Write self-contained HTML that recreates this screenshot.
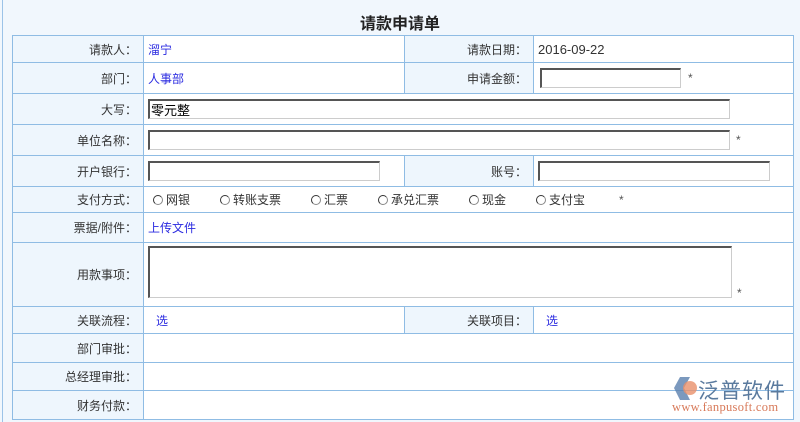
<!DOCTYPE html>
<html><head><meta charset="utf-8"><style>
*{margin:0;padding:0;box-sizing:border-box}
body{width:800px;height:422px;background:#f1f7fd;font-family:"Liberation Sans","Noto Sans CJK SC",sans-serif;font-size:12px;color:#333;position:relative;overflow:hidden}
.pb{position:absolute;left:2px;top:0;width:1px;height:422px;background:#9cc3e8}
.t{position:absolute;left:0;top:10px;width:800px;text-align:center;font-size:16px;font-weight:bold;color:#222}
.c{position:absolute;border:1px solid #8fbce4;background:#fff;display:flex;align-items:center}
.l{background:#eef6fd;justify-content:flex-end;padding-right:6px}
.v{padding-left:4px}
.b{color:#2a2ae0}
input,.ta{border:1px solid #ccc;border-top:2px solid #555;border-left:2px solid #555;background:#fff;height:20px;font-size:13px;font-family:inherit}
.r{display:inline-block;width:10px;height:10px;border-radius:50%;border:1px solid #888;border-left-color:#333;border-top-color:#333;margin-right:3px;vertical-align:-1px;background:#fff}
.s{color:#555;margin-left:6px}
.logo{position:absolute;left:668px;top:375px}
</style></head><body>
<div class="pb"></div>
<div class="t">请款申请单</div>
<div class="c l" style="left:12px;top:35px;width:132px;height:28px">请款人：</div>
<div class="c v b" style="left:143px;top:35px;width:262px;height:28px">溜宁</div>
<div class="c l" style="left:404px;top:35px;width:130px;height:28px">请款日期：</div>
<div class="c v" style="left:533px;top:35px;width:261px;height:28px;font-size:13px">2016-09-22</div>
<div class="c l" style="left:12px;top:62px;width:132px;height:32px">部门：</div>
<div class="c v b" style="left:143px;top:62px;width:262px;height:32px">人事部</div>
<div class="c l" style="left:404px;top:62px;width:130px;height:32px">申请金额：</div>
<div class="c v" style="left:533px;top:62px;width:261px;height:32px"><input style="width:141px;margin-left:2px"><span class="s" style="margin-left:7px">*</span></div>
<div class="c l" style="left:12px;top:93px;width:132px;height:32px">大写：</div>
<div class="c v" style="left:143px;top:93px;width:651px;height:32px"><input value="零元整" style="width:582px;padding-left:1px"></div>
<div class="c l" style="left:12px;top:124px;width:132px;height:32px">单位名称：</div>
<div class="c v" style="left:143px;top:124px;width:651px;height:32px"><input style="width:582px"><span class="s">*</span></div>
<div class="c l" style="left:12px;top:155px;width:132px;height:32px">开户银行：</div>
<div class="c v" style="left:143px;top:155px;width:262px;height:32px"><input style="width:232px"></div>
<div class="c l" style="left:404px;top:155px;width:130px;height:32px">账号：</div>
<div class="c v" style="left:533px;top:155px;width:261px;height:32px"><input style="width:232px"></div>
<div class="c l" style="left:12px;top:186px;width:132px;height:27px">支付方式：</div>
<div class="c v" style="left:143px;top:186px;width:651px;height:27px;padding-left:9px">
<span style="width:67px;display:inline-block"><i class="r"></i>网银</span><span style="width:91px;display:inline-block"><i class="r"></i>转账支票</span><span style="width:67px;display:inline-block"><i class="r"></i>汇票</span><span style="width:91px;display:inline-block"><i class="r"></i>承兑汇票</span><span style="width:67px;display:inline-block"><i class="r"></i>现金</span><span style="width:77px;display:inline-block"><i class="r"></i>支付宝</span><span class="s">*</span></div>
<div class="c l" style="left:12px;top:212px;width:132px;height:31px">票据/附件：</div>
<div class="c v b" style="left:143px;top:212px;width:651px;height:31px">上传文件</div>
<div class="c l" style="left:12px;top:242px;width:132px;height:65px">用款事项：</div>
<div class="c v" style="left:143px;top:242px;width:651px;height:65px;align-items:flex-start;padding-top:3px"><div class="ta" style="width:584px;height:52px"></div><span class="s" style="margin-top:40px;margin-left:5px">*</span></div>
<div class="c l" style="left:12px;top:306px;width:132px;height:28px">关联流程：</div>
<div class="c v b" style="left:143px;top:306px;width:262px;height:28px;padding-left:12px">选</div>
<div class="c l" style="left:404px;top:306px;width:130px;height:28px">关联项目：</div>
<div class="c v b" style="left:533px;top:306px;width:261px;height:28px;padding-left:12px">选</div>
<div class="c l" style="left:12px;top:333px;width:132px;height:30px">部门审批：</div>
<div class="c" style="left:143px;top:333px;width:651px;height:30px"></div>
<div class="c l" style="left:12px;top:362px;width:132px;height:29px">总经理审批：</div>
<div class="c" style="left:143px;top:362px;width:651px;height:29px"></div>
<div class="c l" style="left:12px;top:390px;width:132px;height:30px">财务付款：</div>
<div class="c" style="left:143px;top:390px;width:651px;height:30px"></div>
<div class="logo">
<svg width="30" height="26" style="position:absolute;left:2px;top:1px" viewBox="0 0 30 26"><path d="M10 1 L20 1 L14 12 L20 24 L10 24 L4 12Z" fill="#5a7fae" opacity=".8"/><circle cx="20" cy="12" r="7" fill="#e8906a" opacity=".8"/></svg>
<div style="position:absolute;left:30px;top:0px;font-size:21px;color:#5a7a9e;white-space:nowrap;letter-spacing:1px">泛普软件</div>
<div style="position:absolute;left:4px;top:25px;font-family:'Liberation Serif',serif;font-size:12.5px;color:#d87a5a;white-space:nowrap;letter-spacing:0.3px">www.fanpusoft.com</div>
</div>
</body></html>
